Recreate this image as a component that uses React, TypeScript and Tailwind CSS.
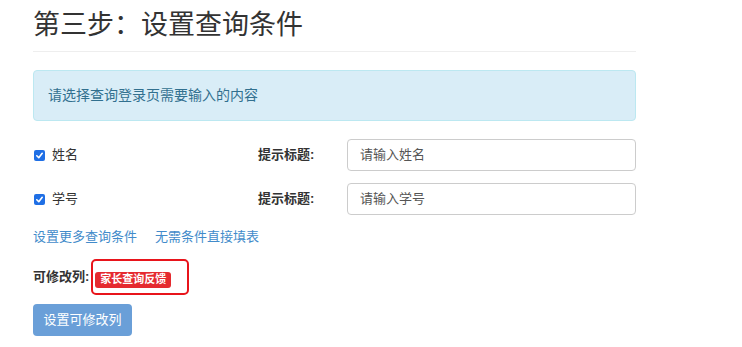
import React from 'react'

const font = { fontFamily: '"Liberation Sans", "Noto Sans CJK SC", sans-serif' }

function Check() {
  return (
    <span className="w-[11px] h-[11px] rounded-[2px] bg-[#1f6fe5] flex items-center justify-center">
      <svg width="9" height="9" viewBox="0 0 10 10" fill="none" stroke="white" strokeWidth="1.8" strokeLinecap="round" strokeLinejoin="round">
        <polyline points="2 5.3 4.2 7.4 8 2.6" />
      </svg>
    </span>
  )
}

function FieldRow({ label, placeholder }: { label: string; placeholder: string }) {
  return (
    <div className="flex items-center h-[32px]">
      <div className="w-[225px] flex items-center gap-[7px] pl-px">
        <Check />
        <span className="text-[13px] text-[#333]">{label}</span>
      </div>
      <div className="w-[89px] text-[13px] font-bold text-[#333]">提示标题:</div>
      <div className="w-[289px] h-[32px] border border-[#ccc] rounded-[4px] flex items-center px-[12px] text-[13px] text-[#555]">
        {placeholder}
      </div>
    </div>
  )
}

export default function App() {
  return (
    <div className="bg-white w-[742px] h-[347px] overflow-hidden" style={font}>
      <div className="ml-[33px] w-[603px]">
        <h1 className="mt-[7px] text-[27px] leading-[36px] text-[#333] font-normal">第三步：设置查询条件</h1>
        <div className="mt-[8px] border-t border-[#eee]" />
        <div className="mt-[18px] h-[51px] bg-[#d9edf7] border border-[#bce8f1] rounded-[4px] flex items-center pl-[14px] text-[14px] text-[#31708f]">
          请选择查询登录页需要输入的内容
        </div>
        <div className="mt-[18px] flex flex-col gap-[12px]">
          <FieldRow label="姓名" placeholder="请输入姓名" />
          <FieldRow label="学号" placeholder="请输入学号" />
        </div>
        <div className="mt-[13px] flex gap-[18px] text-[13px] leading-[18px] text-[#428bca]">
          <span>设置更多查询条件</span>
          <span>无需条件直接填表</span>
        </div>
        <div className="mt-[13px] flex items-center gap-[2px]">
          <span className="text-[13px] font-bold text-[#333]">可修改列:</span>
          <div className="w-[98px] h-[36px] border-2 border-[#e8141b] rounded-[5px] pl-[2px] pt-[5px]">
            <span className="inline-flex items-center h-[16px] px-[5px] bg-[#e52a2f] rounded-[3px] text-white text-[11px] font-bold leading-none">家长查询反馈</span>
          </div>
        </div>
        <button className="mt-[9px] w-[99px] h-[32px] bg-[#6a9fd8] rounded-[4px] text-white text-[13px]">设置可修改列</button>
      </div>
    </div>
  )
}
